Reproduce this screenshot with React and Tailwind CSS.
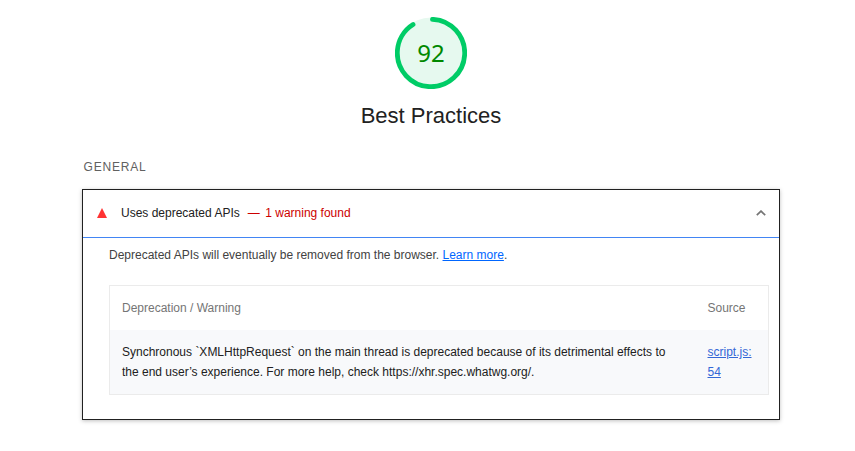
const font = "font-['Liberation_Sans',Arial,sans-serif]";

function Gauge() {
  return (
    <div className="relative flex h-[72px] w-[72px] items-center justify-center">
      <svg className="absolute inset-0" width="72" height="72" viewBox="0 0 72 72">
        <circle cx="36" cy="36" r="35.5" fill="#e6f9ef" />
        <circle
          cx="36"
          cy="36"
          r="33.7"
          fill="none"
          stroke="#00cc66"
          strokeWidth="4.8"
          strokeLinecap="round"
          strokeDasharray="191 212"
          transform="rotate(-87.5 36 36)"
        />
      </svg>
      <span className="relative font-['Noto_Sans',sans-serif] text-[24px] leading-none text-[#008800]">92</span>
    </div>
  );
}

export default function App() {
  return (
    <main className={`h-[451px] w-[855px] overflow-hidden bg-white pt-[17px] pl-[82px] text-[12px] text-[#212121] ${font}`}>
      <header className="flex w-[698px] flex-col items-center">
        <Gauge />
        <h1 className="mt-[13px] text-[22px] leading-[28px]">Best Practices</h1>
      </header>
      <h2 className="mt-[27px] pl-[1.5px] text-[12px] leading-5 tracking-[0.8px] text-[#616161]">GENERAL</h2>
      <section className="mt-3 h-[231px] w-[698px] border border-[#212121] shadow-[0_1px_4px_rgba(0,0,0,0.25)]">
        <div className="flex h-[48px] items-center border-b border-[#4285f4] pr-[13px] pb-[2px] pl-[14px]">
          <svg width="10" height="10" viewBox="0 0 10 10">
            <path d="M5 0 10 10H0Z" fill="#ff3333" />
          </svg>
          <span className="ml-[14px]">Uses deprecated APIs</span>
          <span className="ml-2 text-[#cc0000]">—</span>
          <span className="ml-[5.5px] text-[#cc0000]">1 warning found</span>
          <svg className="ml-auto" width="10" height="6" viewBox="0 0 10 6">
            <path d="M0.8 5.2 5 1.1 9.2 5.2" fill="none" stroke="#757575" strokeWidth="1.7" />
          </svg>
        </div>
        <p className="mt-[7px] pl-[26px] leading-5 text-[#424242]">
          Deprecated APIs will eventually be removed from the browser.{" "}
          <a className="text-[#0066ff] underline">Learn more</a>.
        </p>
        <div className="mt-5 ml-[26px] h-[110px] w-[660px] border border-[#ebebeb]">
          <div className="flex h-[44px] items-center px-3 text-[#757575]">
            <span className="w-[585.5px]">Deprecation / Warning</span>
            <span>Source</span>
          </div>
          <div className="flex h-[64px] bg-[#f8f9fb] px-3 pt-3 leading-5">
            <p className="w-[585.5px]">
              Synchronous `XMLHttpRequest` on the main thread is deprecated because of its detrimental effects to
              <br />
              the end user’s experience. For more help, check https://xhr.spec.whatwg.org/.
            </p>
            <a className="text-[#3367d6] underline">
              script.js:
              <br />
              54
            </a>
          </div>
        </div>
      </section>
    </main>
  );
}
